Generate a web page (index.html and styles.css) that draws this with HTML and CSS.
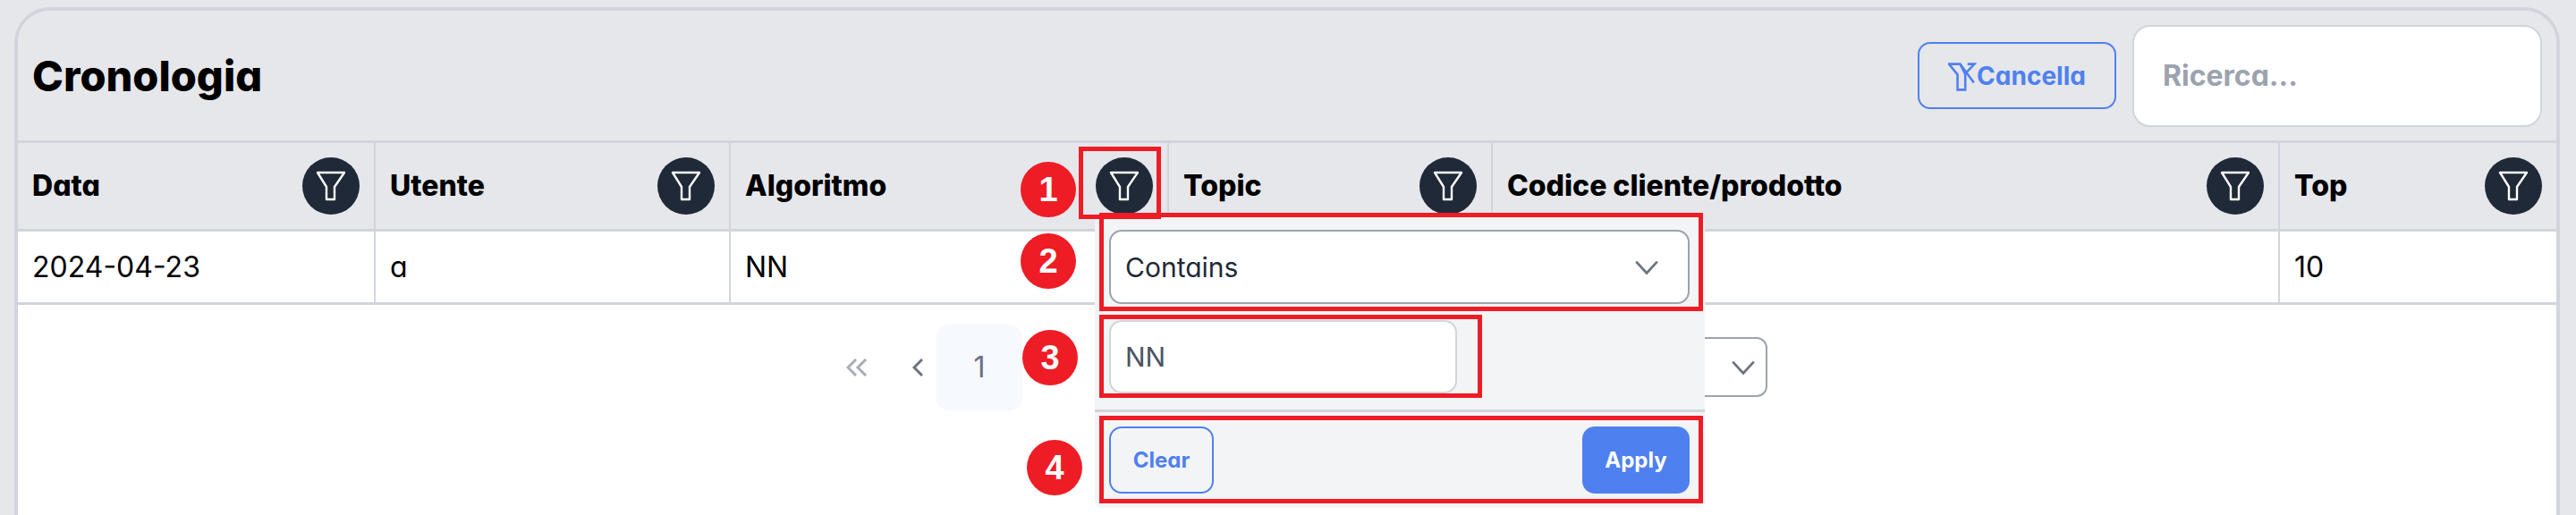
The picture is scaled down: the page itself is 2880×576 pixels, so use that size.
FILE: index.html
```html
<!DOCTYPE html>
<html lang="it">
<head>
<meta charset="UTF-8">
<title>Cronologia</title>
<link rel="stylesheet" href="styles.css">
</head>
<body>

<svg class="defs" width="0" height="0">
  <symbol id="funnel" viewBox="0 0 64 64">
    <path d="M17 17H47L36 33V47H27V33Z" fill="none" stroke="currentColor" stroke-width="2.4" stroke-linejoin="round"/>
  </symbol>
  <symbol id="chevron" viewBox="0 0 28 28">
    <path d="M3 8L14 20L25 8" fill="none" stroke="currentColor" stroke-width="2.6"/>
  </symbol>
</svg>

<div class="card">
  <div class="card-head">
    <h1 class="title">Cronologia</h1>
    <div class="tools">
      <button class="btn btn-outline btn-cancel">
        <svg class="clear-icon" viewBox="0 0 100 100"><path d="M3 5H42L60 40V95H33V42Z M68 5H92L62 36 M42 5L90 70" fill="none" stroke="currentColor" stroke-width="8"/></svg>Cancella
      </button>
      <div class="search">Ricerca...</div>
    </div>
  </div>

  <table class="grid">
    <colgroup>
      <col class="c1"><col class="c2"><col class="c3"><col class="c4"><col class="c5"><col class="c6">
    </colgroup>
    <thead>
      <tr>
        <th><div class="th-in">Data<span class="fbtn"><svg><use href="#funnel"/></svg></span></div></th>
        <th><div class="th-in">Utente<span class="fbtn"><svg><use href="#funnel"/></svg></span></div></th>
        <th><div class="th-in">Algoritmo<span class="fbtn"><svg><use href="#funnel"/></svg></span></div></th>
        <th><div class="th-in">Topic<span class="fbtn"><svg><use href="#funnel"/></svg></span></div></th>
        <th><div class="th-in">Codice cliente/prodotto<span class="fbtn"><svg><use href="#funnel"/></svg></span></div></th>
        <th><div class="th-in">Top<span class="fbtn"><svg><use href="#funnel"/></svg></span></div></th>
      </tr>
    </thead>
    <tbody>
      <tr><td>2024-04-23</td><td>a</td><td>NN</td><td></td><td></td><td>10</td></tr>
    </tbody>
  </table>

  <div class="pager">
    <svg class="pg-first" viewBox="0 0 24 20"><path d="M11 1L2 10L11 19M22 1L13 10L22 19" fill="none" stroke="currentColor" stroke-width="3"/></svg>
    <svg class="pg-prev" viewBox="0 0 12 20"><path d="M11 1L2 10L11 19" fill="none" stroke="currentColor" stroke-width="3"/></svg>
    <span class="pg-num">1</span>
    <span class="pg-size"><svg class="chev"><use href="#chevron"/></svg></span>
  </div>
</div>

<!-- filtro aperto -->
<div class="popup">
  <div class="sel"><span>Contains</span><svg class="chev"><use href="#chevron"/></svg></div>
  <div class="inp">NN</div>
  <div class="popup-foot">
    <button class="btn btn-outline btn-sm">Clear</button>
    <button class="btn btn-fill btn-sm">Apply</button>
  </div>
</div>

<!-- annotazioni -->
<div class="mark m1"></div>
<div class="mark m2"></div>
<div class="mark m3"></div>
<div class="mark m4"></div>
<div class="dot d1">1</div>
<div class="dot d2">2</div>
<div class="dot d3">3</div>
<div class="dot d4">4</div>

</body>
</html>
```

FILE: styles.css
```css
html, body {
  margin: 0;
  height: 576px;
  overflow: hidden;
}

body {
  background-color: #e5e7eb;
  font-family: Inter, "Liberation Sans", sans-serif;
  font-feature-settings: "cv11";
  padding: 8px 18px 0 16px;
  box-sizing: border-box;
  position: relative;
}

.defs {
  position: absolute;
}

.card {
  height: 568px;
  box-sizing: border-box;
  background-color: #fff;
  border: 4px solid #d1d5db;
  border-bottom: 0;
  border-radius: 40px 40px 0 0;
  overflow: hidden;
}

.card-head {
  height: 148px;
  background-color: #e5e7eb;
  display: flex;
  align-items: center;
  justify-content: space-between;
  padding: 0 16px 0 16px;
  border-bottom: 3px solid #d1d5db;
  box-sizing: border-box;
}

.title {
  margin: 0;
  font-size: 47px;
  font-weight: 800;
  color: #000;
}

.tools {
  display: flex;
  align-items: center;
  gap: 18px;
}

.btn {
  font-family: inherit;
  font-feature-settings: inherit;
  font-weight: 700;
  border-radius: 14px;
  cursor: pointer;
}

.btn-outline {
  background-color: transparent;
  border: 2px solid #4f80ef;
  color: #4f80ef;
}

.btn-fill {
  background-color: #4f80ef;
  border: 2px solid #4f80ef;
  color: #fff;
}

.btn-cancel {
  width: 222px;
  height: 75px;
  font-size: 28px;
  display: flex;
  align-items: center;
  justify-content: center;
  padding: 0;
}

.clear-icon {
  width: 32px;
  height: 34px;
  margin-top: 2px;
}

.search {
  width: 458px;
  height: 114px;
  box-sizing: border-box;
  background-color: #fff;
  border: 2px solid #d1d5db;
  border-radius: 20px;
  padding-left: 32px;
  display: flex;
  align-items: center;
  font-size: 32px;
  font-weight: 700;
  color: #9ca3af;
}

.grid {
  width: 100%;
  table-layout: fixed;
  border-collapse: collapse;
}

.c1 { width: 399px; }
.c2 { width: 397px; }
.c3 { width: 490px; }
.c4 { width: 362px; }
.c5 { width: 880px; }

.grid th, .grid td {
  padding: 0 16px;
  border-left: 2px solid #d1d5db;
  text-align: left;
  color: #000;
  font-size: 32px;
}

.grid th:first-child, .grid td:first-child {
  border-left: 0;
}

.grid th {
  height: 97px;
  background-color: #e5e7eb;
  border-bottom: 3px solid #d1d5db;
  font-weight: 800;
  box-sizing: border-box;
}

.grid td {
  height: 82px;
  border-bottom: 3px solid #d1d5db;
  font-weight: 400;
  box-sizing: border-box;
}

.th-in {
  display: flex;
  align-items: center;
  justify-content: space-between;
}

.fbtn {
  width: 64px;
  height: 64px;
  border-radius: 50%;
  background-color: #1f2937;
  color: #fff;
  display: block;
}

.fbtn svg {
  width: 64px;
  height: 64px;
  display: block;
}

.pager {
  display: flex;
  align-items: center;
  height: 96px;
  margin-top: 22px;
  padding-left: 926px;
  color: #6b7280;
  font-size: 32px;
}

.pg-first {
  width: 24px;
  height: 20px;
  color: #a9adb6;
}

.pg-prev {
  width: 12px;
  height: 20px;
  margin-left: 50px;
}

.pg-num {
  width: 96px;
  height: 96px;
  margin-left: 15px;
  background-color: #f6f9fe;
  border-radius: 14px;
  display: flex;
  align-items: center;
  justify-content: center;
}

.pg-size {
  width: 140px;
  height: 67px;
  margin-left: 693px;
  box-sizing: border-box;
  border: 2px solid #9ca3af;
  border-radius: 12px;
  display: flex;
  align-items: center;
  justify-content: flex-end;
  padding-right: 10px;
  color: #6b7280;
}

.chev {
  width: 30px;
  height: 30px;
}

.popup {
  position: absolute;
  left: 1224px;
  top: 242px;
  width: 682px;
  height: 326px;
  box-sizing: border-box;
  background-color: #f3f4f6;
  border-radius: 8px;
  padding: 15px 17px 0 16px;
}

.sel {
  height: 83px;
  box-sizing: border-box;
  background-color: #fff;
  border: 2px solid #9ca3af;
  border-radius: 14px;
  display: flex;
  align-items: center;
  justify-content: space-between;
  padding: 0 31px 0 16px;
  color: #1f2937;
  font-size: 30px;
}

.sel .chev {
  color: #6b7280;
}

.inp {
  width: 389px;
  height: 82px;
  margin-top: 18px;
  box-sizing: border-box;
  background-color: #fff;
  border: 2px solid #d1d5db;
  border-radius: 14px;
  display: flex;
  align-items: center;
  padding-left: 16px;
  color: #4b5563;
  font-size: 30px;
}

.popup-foot {
  margin: 18px -17px 0 -16px;
  padding: 16px 17px 0 16px;
  border-top: 3px solid #d1d5db;
  display: flex;
  justify-content: space-between;
}

.btn-sm {
  height: 75px;
  padding: 0;
  font-size: 24px;
}

.btn-outline.btn-sm { width: 117px; }
.btn-fill.btn-sm { width: 120px; }

.mark {
  position: absolute;
  box-sizing: border-box;
  border: 5px solid #ee1c25;
}

.m1 { left: 1206px; top: 164px; width: 92px; height: 81px; }
.m2 { left: 1229px; top: 238px; width: 675px; height: 110px; }
.m3 { left: 1229px; top: 352px; width: 428px; height: 93px; }
.m4 { left: 1229px; top: 465px; width: 675px; height: 98px; }

.dot {
  position: absolute;
  width: 62px;
  height: 62px;
  border-radius: 50%;
  background-color: #ee1c25;
  color: #fff;
  font-family: "Liberation Sans", sans-serif;
  font-weight: 700;
  font-size: 38px;
  display: flex;
  align-items: center;
  justify-content: center;
}

.d1 { left: 1141px; top: 181px; }
.d2 { left: 1141px; top: 261px; }
.d3 { left: 1143px; top: 369px; }
.d4 { left: 1148px; top: 492px; }
```
